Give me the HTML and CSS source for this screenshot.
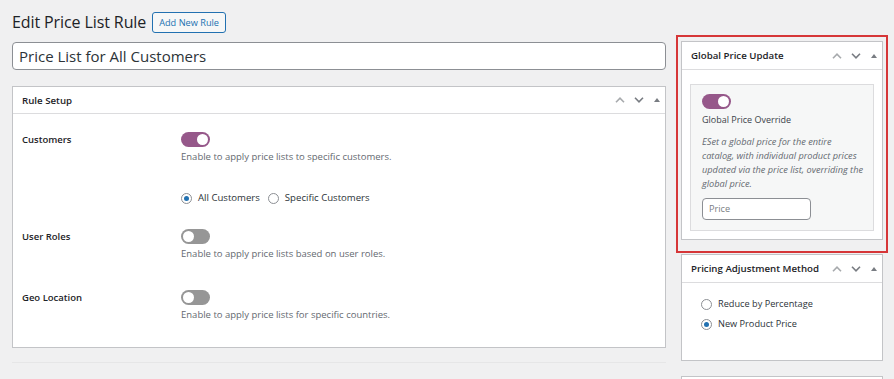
FILE: index.html
```html
<!DOCTYPE html>
<html>
<head>
<meta charset="utf-8">
<link rel="stylesheet" href="styles.css">
</head>
<body>
<div class="page">
  <div class="main">
    <div class="title-row">
      <h1 class="page-title">Edit Price List Rule</h1>
      <a class="add-btn">Add New Rule</a>
    </div>
    <div class="title-input">Price List for All Customers</div>

    <div class="postbox rule-box">
      <div class="pb-head">
        <h2 class="pb-title">Rule Setup</h2>
        <div class="handles">
          <span class="h-btn h-wide"><svg width="10" height="6" viewBox="0 0 10 6"><polyline points="1,5.2 5,1.2 9,5.2" fill="none" stroke="#a7aaad" stroke-width="1.6"/></svg></span>
          <span class="h-btn h-wide"><svg width="10" height="6" viewBox="0 0 10 6"><polyline points="1,0.8 5,4.8 9,0.8" fill="none" stroke="#787c82" stroke-width="1.6"/></svg></span>
          <span class="h-btn h-narrow"><svg width="6" height="4" viewBox="0 0 6 4"><polygon points="0,4 3,0 6,4" fill="#787c82"/></svg></span>
        </div>
      </div>
      <div class="rule-body">
        <div class="row row-customers">
          <div class="row-label">Customers</div>
          <div class="row-field">
            <span class="toggle on"><span class="knob"></span></span>
            <p class="desc">Enable to apply price lists to specific customers.</p>
            <div class="radio-line">
              <label class="radio-item"><span class="radio checked"></span>All Customers</label>
              <label class="radio-item"><span class="radio"></span>Specific Customers</label>
            </div>
          </div>
        </div>
        <div class="row row-roles">
          <div class="row-label">User Roles</div>
          <div class="row-field">
            <span class="toggle"><span class="knob"></span></span>
            <p class="desc">Enable to apply price lists based on user roles.</p>
          </div>
        </div>
        <div class="row row-geo">
          <div class="row-label">Geo Location</div>
          <div class="row-field">
            <span class="toggle"><span class="knob"></span></span>
            <p class="desc">Enable to apply price lists for specific countries.</p>
          </div>
        </div>
      </div>
    </div>
    <div class="next-main"></div>
  </div>

  <div class="side">
    <div class="highlight">
      <div class="postbox">
        <div class="pb-head side-head">
          <h2 class="pb-title">Global Price Update</h2>
          <div class="handles">
            <span class="h-btn h-wide"><svg width="10" height="6" viewBox="0 0 10 6"><polyline points="1,5.2 5,1.2 9,5.2" fill="none" stroke="#a7aaad" stroke-width="1.6"/></svg></span>
            <span class="h-btn h-wide"><svg width="10" height="6" viewBox="0 0 10 6"><polyline points="1,0.8 5,4.8 9,0.8" fill="none" stroke="#787c82" stroke-width="1.6"/></svg></span>
            <span class="h-btn h-narrow"><svg width="6" height="4" viewBox="0 0 6 4"><polygon points="0,4 3,0 6,4" fill="#787c82"/></svg></span>
          </div>
        </div>
        <div class="gpu-body">
          <div class="panel">
            <span class="toggle on"><span class="knob"></span></span>
            <div class="panel-label">Global Price Override</div>
            <p class="panel-desc">ESet a global price for the entire catalog, with individual product prices updated via the price list, overriding the global price.</p>
            <div class="price-input">Price</div>
          </div>
        </div>
      </div>
    </div>

    <div class="postbox pam-box">
      <div class="pb-head side-head">
        <h2 class="pb-title">Pricing Adjustment Method</h2>
        <div class="handles">
          <span class="h-btn h-wide"><svg width="10" height="6" viewBox="0 0 10 6"><polyline points="1,5.2 5,1.2 9,5.2" fill="none" stroke="#a7aaad" stroke-width="1.6"/></svg></span>
          <span class="h-btn h-wide"><svg width="10" height="6" viewBox="0 0 10 6"><polyline points="1,0.8 5,4.8 9,0.8" fill="none" stroke="#787c82" stroke-width="1.6"/></svg></span>
          <span class="h-btn h-narrow"><svg width="6" height="4" viewBox="0 0 6 4"><polygon points="0,4 3,0 6,4" fill="#787c82"/></svg></span>
        </div>
      </div>
      <div class="pam-body">
        <label class="pam-item"><span class="radio"></span>Reduce by Percentage</label>
        <label class="pam-item"><span class="radio checked"></span>New Product Price</label>
      </div>
    </div>
    <div class="postbox next-side"></div>
  </div>
</div>
</body>
</html>
```

FILE: styles.css
```css
* { box-sizing: border-box; }
html, body { margin: 0; padding: 0; }
body {
  background: #f0f0f1;
  font-family: "Open Sans", "Noto Sans", sans-serif;
  color: #1d2327;
  width: 894px;
  height: 379px;
  overflow: hidden;
}
.page {
  display: flex;
  align-items: flex-start;
  gap: 10px;
  padding: 0 6px 0 12px;
}
.main { width: 654px; flex: none; padding-top: 12px; }
.side { width: 212px; flex: none; padding-top: 35px; }

.title-row { display: flex; align-items: center; gap: 6px; height: 21px; }
.page-title { margin: 0; font-size: 16px; font-weight: 400; line-height: 21px; letter-spacing: -0.1px; }
.add-btn {
  display: inline-flex; align-items: center;
  height: 21px; padding: 0 6px;
  border: 1px solid #2271b1; border-radius: 3px;
  background: #f6f7f7; color: #2271b1;
  font-size: 9.2px; line-height: 1;
}
.title-input {
  margin-top: 9px;
  height: 28px;
  background: #fff;
  border: 1px solid #8c8f94;
  border-radius: 4px;
  padding: 0 6px;
  font-size: 15px;
  line-height: 26px;
  color: #2c3338;
}

.postbox { background: #fff; border: 1px solid #c3c4c7; }
.rule-box { margin-top: 16px; height: 262px; }
.pb-head {
  display: flex; align-items: center; justify-content: space-between;
  height: 27px;
  border-bottom: 1px solid #dcdcde;
  padding-left: 9px;
}
.pb-title { margin: 0; font-size: 9.7px; font-weight: 600; color: #1d2327; }
.handles { display: flex; align-items: center; height: 100%; }
.h-btn { display: flex; align-items: center; justify-content: center; height: 100%; }
.h-wide { width: 19px; }
.h-narrow { width: 17px; }
.h-btn svg { display: block; }

.rule-body { padding: 18px 0 0 9px; }
.row { display: grid; grid-template-columns: 159px 1fr; }
.row-label { font-size: 9.5px; font-weight: 600; line-height: 15px; color: #1d2327; }
.row-field { display: flex; flex-direction: column; align-items: flex-start; }
.row-customers { margin-bottom: 24px; }
.row-roles { margin-bottom: 29px; }

.toggle {
  position: relative;
  display: block;
  width: 29px; height: 15px;
  border-radius: 8px;
  background: #969696;
  flex: none;
}
.toggle.on { background: #96588a; }
.knob {
  position: absolute;
  top: 2px; left: 2px;
  width: 11px; height: 11px;
  border-radius: 50%;
  background: #fff;
}
.toggle.on .knob { left: 16px; }

.desc { margin: 3px 0 0; font-size: 9.5px; line-height: 14px; color: #646970; }

.radio-line { display: flex; align-items: center; gap: 8px; margin-top: 27px; height: 14px; }
.radio-item, .pam-item {
  display: flex; align-items: center; gap: 6px;
  font-size: 9.6px; color: #2c3338; line-height: 14px;
}
.pam-item { font-size: 9.2px; }
.radio {
  position: relative;
  display: block;
  width: 11px; height: 11px;
  border: 1px solid #8c8f94;
  border-radius: 50%;
  background: #fff;
  flex: none;
}
.radio.checked::after {
  content: "";
  position: absolute;
  top: 2px; left: 2px;
  width: 5px; height: 5px;
  border-radius: 50%;
  background: #2271b1;
}

.next-main { margin-top: 14px; height: 20px; border-top: 1px solid #e6e6e7; }

.highlight {
  border: 2px solid #d63638;
  padding: 4px 3px 11px;
}
.side-head { height: 28px; }
.gpu-body { padding: 14px 8px 8px; }
.panel {
  background: #f6f7f7;
  border: 1px solid #dcdcde;
  padding: 9px 4px 11px 11px;
  height: 147px;
}
.panel-label { margin-top: 4px; font-size: 9px; line-height: 14px; color: #3c434a; }
.panel-desc {
  margin: 8px 0 0;
  width: 163px;
  font-size: 9.2px; line-height: 14px;
  font-style: italic; color: #646970;
}
.price-input {
  margin-top: 7px;
  width: 109px; height: 22px;
  background: #fff;
  border: 1px solid #8c8f94;
  border-radius: 4px;
  padding: 0 6px;
  font-size: 9.2px; line-height: 20px;
  color: #787c82;
}

.pam-box { margin: 1px 5px 0; height: 107px; }
.pam-body { padding: 14px 0 0 19px; display: flex; flex-direction: column; gap: 6px; }
.next-side { margin: 15px 5px 0; height: 30px; }
```
